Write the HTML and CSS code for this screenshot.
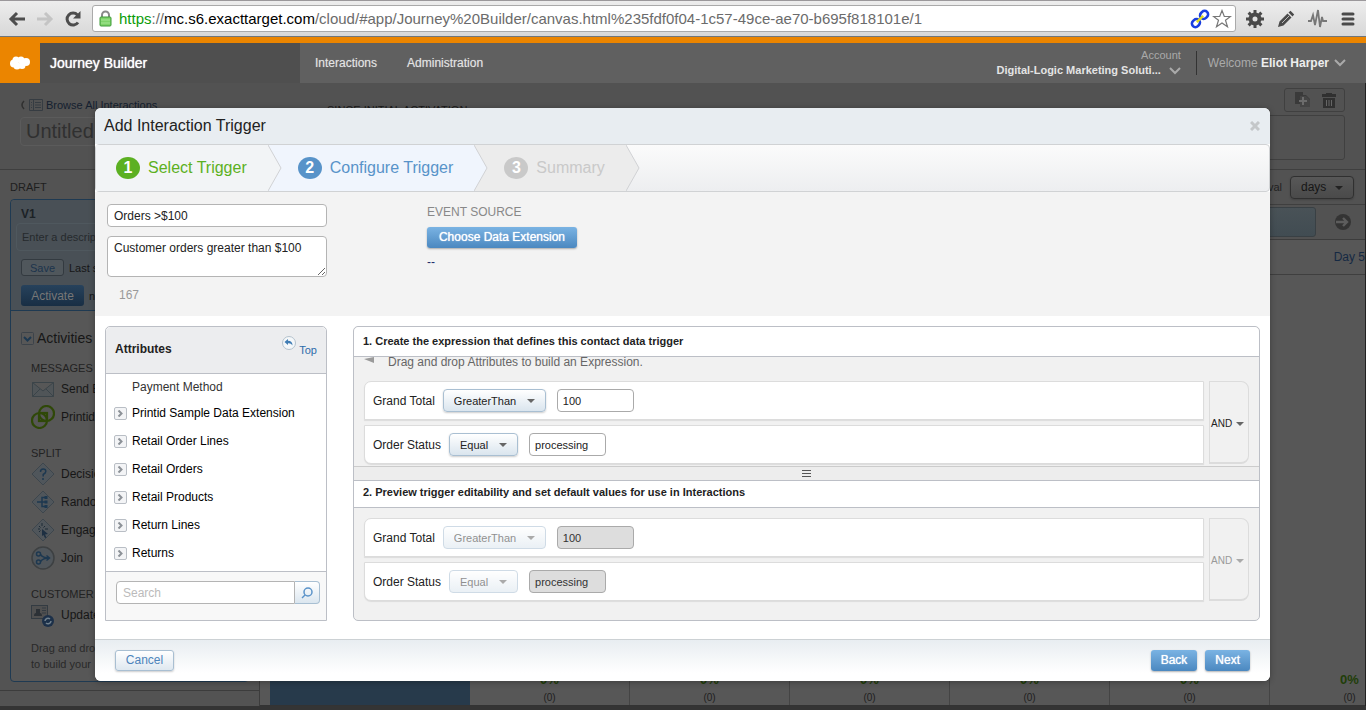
FILE: index.html
```html
<!DOCTYPE html>
<html lang="en">
<head>
<meta charset="utf-8">
<title>Journey Builder</title>
<link rel="stylesheet" href="styles.css">
</head>
<body>
<div class="browser">
  <button class="nav-btn" aria-label="Back"><svg width="18" height="18" viewBox="0 0 18 18" fill="none" stroke="#4d4d4d" stroke-width="3"><path d="M17 9H4M9 3L3 9l6 6"/></svg></button>
  <button class="nav-btn" aria-label="Forward"><svg width="18" height="18" viewBox="0 0 18 18" fill="none" stroke="#c4c4c4" stroke-width="3"><path d="M1 9h13M9 3l6 6-6 6"/></svg></button>
  <button class="nav-btn" aria-label="Reload"><svg width="18" height="18" viewBox="0 0 18 18"><path d="M14 12.500A6 6 0 1 1 13.500 5" fill="none" stroke="#4d4d4d" stroke-width="3"/><path d="M16.500 1v7.500H9z" fill="#4d4d4d"/></svg></button>
  <div class="address">
    <svg width="13" height="17" viewBox="0 0 13 17"><path d="M3 8V5a3.500 3.500 0 0 1 7 0v3" fill="none" stroke="#8a8a8a" stroke-width="2"/><rect x="1" y="7" width="11" height="9" rx="1" fill="#7fd36a" stroke="#3f9a38"/><path d="M2 10h9M2 13h9" stroke="#a5e694"/></svg>
    <div class="url"><span class="secure">https</span>://<span class="host">mc.s6.exacttarget.com</span>/cloud/#app/Journey%20Builder/canvas.html%235fdf0f04-1c57-49ce-ae70-b695f818101e/1</div>
    <svg width="20" height="20" viewBox="0 0 20 20" fill="none"><g transform="rotate(-45 10 10)" stroke="#1a3fe0" stroke-width="2.600"><rect x="0" y="6.500" width="8.500" height="7" rx="3.500"/><rect x="11.500" y="6.500" width="8.500" height="7" rx="3.500"/><path d="M5.500 10h9" stroke="#e0dc20" stroke-width="2.400"/></g></svg>
    <svg width="20" height="20" viewBox="0 0 20 20"><path d="M10 1.500l2.300 6h6.200l-5 3.800 2 6.500L10 14l-5.500 3.800 2-6.500-5-3.800h6.200z" fill="#fff" stroke="#777" stroke-width="1.200"/></svg>
  </div>
  <button class="ext" aria-label="Settings"><svg width="18" height="18" viewBox="0 0 18 18" fill="none" stroke="#4a4a4a"><circle cx="9" cy="9" r="4.500" stroke-width="4"/><path d="M9 0v4M9 14v4M0 9h4M14 9h4M2.600 2.600l3 3M12.400 12.400l3 3M2.600 15.400l3-3M12.400 5.600l3-3" stroke-width="3"/></svg></button>
  <button class="ext" aria-label="Edit"><svg width="18" height="18" viewBox="0 0 18 18" fill="#4a4a4a"><path d="M1 17l1.500-5.500 8-8 4 4-8 8zM11.500 2.500L13.500.800l3.700 3.700-1.700 2z"/><path d="M5 13l7-7" stroke="#bbb"/></svg></button>
  <button class="ext" aria-label="Activity"><svg width="20" height="20" viewBox="0 0 20 20" fill="none" stroke="#777" stroke-width="1.800"><path d="M1 12h3l2-6 2 10 3-15 2 17 2-10 1 4h4"/></svg></button>
  <button class="ext" aria-label="Menu"><svg width="14" height="14" viewBox="0 0 14 14" stroke="#4a4a4a" stroke-width="3" stroke-linecap="round"><path d="M2 2h10M2 7h10M2 12h10"/></svg></button>
</div>

<header class="topbar">
  <div class="logo"><svg width="20" height="14" viewBox="0 0 20 14" fill="#fff"><circle cx="4" cy="7.500" r="4"/><circle cx="6" cy="4" r="3.500"/><circle cx="11" cy="4" r="3.500"/><circle cx="16" cy="6" r="4"/><circle cx="7" cy="10" r="3.500"/><circle cx="12" cy="9.500" r="3.500"/></svg></div>
  <h1 class="product">Journey Builder</h1>
  <nav class="menu"><a href="#">Interactions</a><a href="#">Administration</a></nav>
  <button class="account"><span class="account-label">Account</span><span class="account-name"><b>Digital-Logic Marketing Soluti...</b><svg width="12" height="8" viewBox="0 0 12 8"><path d="M1 1l5 5 5-5" fill="none" stroke="#aaa" stroke-width="2"/></svg></span></button>
  <button class="user"><span>Welcome <b>Eliot Harper</b></span><svg width="12" height="8" viewBox="0 0 12 8"><path d="M1 1l5 5 5-5" fill="none" stroke="#aaa" stroke-width="2"/></svg></button>
</header>

<main class="workspace">
  <section class="titlebar">
    <div class="title-left">
      <a class="browse" href="#"><svg width="6" height="10" viewBox="0 0 6 10"><path d="M4 1Q0 5 4 9" fill="none" stroke="#303030" stroke-width="1.500"/></svg><svg width="14" height="12" viewBox="0 0 14 12" fill="none" stroke="#363c42"><path d="M.5.500h13v11H.500zM4.500 1v10M2 3.500h1M6 3.500h6M2 6h1M6 6h6M2 8.500h1M6 8.500h6"/></svg>Browse All Interactions</a>
      <input class="name" aria-label="Interaction name" value="Untitled">
    </div>
    <div class="stats-title">SINCE INITIAL ACTIVATION</div>
    <div class="title-right">
      <div class="tools">
        <button aria-label="Copy"><svg width="18" height="16" viewBox="0 0 18 16"><path d="M1 0h8v3h3l4 4v8H6v-3H1z" fill="#3a3a3a"/><path d="M6 4h6l4 4v7H6z" fill="#454545"/><path d="M9 5v8M5 9h8" stroke="#6c6c6c" stroke-width="2"/></svg></button>
        <button aria-label="Delete"><svg width="14" height="15" viewBox="0 0 14 15" fill="#303030"><path d="M4 0h6v1h4v3H0V1h4zM1 5h12v10H1z"/><path d="M4.500 7v6M7 7v6M9.500 7v6" stroke="#666"/></svg></button>
      </div>
      <div class="stats"></div>
    </div>
  </section>
  <div class="columns">
    <aside class="side">
      <div class="draft">DRAFT</div>
      <div class="version">
        <div class="version-head">
          <b class="v-name">V1</b>
          <input class="v-desc" aria-label="Description" placeholder="Enter a description">
          <div class="v-row"><button class="save">Save</button>Last saved</div>
          <div class="v-row"><button class="activate">Activate</button>new</div>
        </div>
        <div class="acts">
          <h2><svg width="13" height="13" viewBox="0 0 13 13" fill="none"><rect x=".5" y=".5" width="12" height="12" rx="1" stroke="#3c434a"/><path d="M3 5l3.500 3.500L10 5" stroke="#1d3850" stroke-width="2"/></svg>Activities</h2>
          <h3>MESSAGES</h3>
          <ul>
            <li><svg width="24" height="24" viewBox="0 0 24 24" fill="#505558" stroke="#3b4449"><path d="M1.500 5.500h21v14h-21zM1.500 5.500L12 14l10.500-8.500M1.500 19.500L9 12M22.500 19.500L15 12"/></svg>Send Email</li>
            <li><svg width="24" height="24" viewBox="0 0 24 24" fill="none" stroke="#2f4808" stroke-width="2.200"><circle cx="8.500" cy="15.500" r="7.500"/><circle cx="15.500" cy="8.500" r="7.500"/><rect x="8" y="8" width="8" height="8"/></svg>Printid</li>
          </ul>
          <h3>SPLIT</h3>
          <ul>
            <li><svg width="24" height="24" viewBox="0 0 24 24" fill="#50565b" stroke="#3d464d"><path d="M12 1l11 11-11 11L1 12z"/><path d="M9.500 10q0-3 2.700-3t2.600 2.500q0 1.500-2.600 3v2M12 16v2" fill="none" stroke="#1d3850" stroke-width="1.500"/></svg>Decision</li>
            <li><svg width="24" height="24" viewBox="0 0 24 24" fill="#50565b" stroke="#3d464d"><path d="M12 1l11 11-11 11L1 12z"/><path d="M6 12h9M15 7.500h-4v9h4" fill="none" stroke="#1d3850" stroke-width="1.500"/><path d="M13.500 6h3v3h-3zM13.500 10.500h3v3h-3zM13.500 15h3v3h-3z" fill="#1d3850" stroke="none"/></svg>Random</li>
            <li><svg width="24" height="24" viewBox="0 0 24 24" fill="#50565b" stroke="#3d464d"><path d="M12 1l11 11-11 11L1 12z"/><path d="M11 5v3M7 11h2M14 11h3M8 8l1.500 1.500M14 8l-1.500 1.500M8 14l1.500-1.500" fill="none" stroke="#1d2a36"/><path d="M11 11l6 5-3 .500 1.500 3-1.500.500-1.500-3-1.500 1z" fill="#1d2f42" stroke="none"/></svg>Engage</li>
            <li><svg width="24" height="24" viewBox="0 0 24 24" fill="none" stroke="#1d3850" stroke-width="1.500"><circle cx="12" cy="12" r="11" fill="#50565b" stroke="#3d4042"/><circle cx="7.500" cy="8" r="2"/><circle cx="7.500" cy="16" r="2"/><path d="M9.500 8.500Q12 12 18 12M9.500 15.500Q12 12 18 12M15.500 9.500L18.500 12l-3 2.500"/></svg>Join</li>
          </ul>
          <h3>CUSTOMER UPDATES</h3>
          <ul>
            <li><svg width="24" height="24" viewBox="0 0 24 24"><rect x=".5" y="2.500" width="16" height="13" fill="#505050" stroke="#333b42"/><path d="M3 13q0-3 2-3V6h4v4q2 0 2 3z" fill="#2c3136"/><path d="M11 5h4M11 7.500h4M11 10h4" stroke="#333b42"/><circle cx="17" cy="18" r="6" fill="#1c3049"/><path d="M14 18a3 3 0 0 1 5-2M20 18a3 3 0 0 1-5 2" stroke="#70808d" fill="none" stroke-width="1.500"/></svg>Update</li>
          </ul>
          <p>Drag and drop<br>to build your</p>
        </div>
      </div>
      <div class="side-foot"></div>
    </aside>
    <section class="canvas">
      <div class="interval"><label for="unit">Interval</label><span class="pick dim"><select id="unit"><option>days</option></select></span></div>
      <div class="pager"><div class="range"></div><svg width="16" height="16" viewBox="0 0 16 16"><circle cx="8" cy="8" r="8" fill="#343434"/><path d="M1 8h11M8 4l4 4-4 4" fill="none" stroke="#5d5d5d" stroke-width="2.400"/></svg></div>
      <div class="days"><a href="#">Day 5</a></div>
      <div class="goals">
        <div class="goal-block"></div>
        <div class="goal"><b>0%</b><span>(0)</span></div>
        <div class="goal"><b>0%</b><span>(0)</span></div>
        <div class="goal"><b>0%</b><span>(0)</span></div>
        <div class="goal"><b>0%</b><span>(0)</span></div>
        <div class="goal"><b>0%</b><span>(0)</span></div>
        <div class="goal"><b>0%</b><span>(0)</span></div>
      </div>
    </section>
  </div>
</main>
<div class="desk"></div>

<div class="modal" role="dialog" aria-labelledby="dlg-title">
  <div class="modal-head"><h2 id="dlg-title">Add Interaction Trigger</h2><button class="close" aria-label="Close"><svg width="10" height="10" viewBox="0 0 10 10"><path d="M1 1l8 8M9 1L1 9" stroke="#c4c7c9" stroke-width="3"/></svg></button></div>
  <ol class="steps">
    <li class="step done"><b>1</b>Select Trigger<svg class="chev" viewBox="0 0 14 46"><path d="M0 0l13 23L0 46z" fill="#f2f4f6"/><path d="M0 0l13 23L0 46" fill="none" stroke="#d0d2d4"/></svg></li>
    <li class="step now"><b>2</b>Configure Trigger<svg class="chev" viewBox="0 0 14 46"><path d="M0 0l13 23L0 46z" fill="#f0f5fd"/><path d="M0 0l13 23L0 46" fill="none" stroke="#d0d2d4"/></svg></li>
    <li class="step later"><b>3</b>Summary<svg class="chev" viewBox="0 0 14 46"><path d="M0 0l13 23L0 46z" fill="#ececec"/><path d="M0 0l13 23L0 46" fill="none" stroke="#d0d2d4"/></svg></li>
  </ol>
  <div class="setup">
    <div class="fields">
      <input aria-label="Trigger name" value="Orders &gt;$100">
      <textarea aria-label="Trigger description">Customer orders greater than $100</textarea>
      <div class="count">167</div>
    </div>
    <div class="source">
      <div class="source-label">EVENT SOURCE</div>
      <button class="primary">Choose Data Extension</button>
      <div>--</div>
    </div>
  </div>
  <div class="builder">
    <div class="attrs">
      <div class="attrs-head"><b>Attributes</b><a href="#"><svg width="14" height="14" viewBox="0 0 14 14"><circle cx="7" cy="7" r="6.500" fill="#f4f7f9" stroke="#b4c2cd"/><path d="M6 3L2.500 6 6 9V7.200q3-.4 4.500 2.300Q10.500 5 6 4.800z" fill="#3f7cb4"/></svg><span>Top</span></a></div>
      <ul class="tree">
        <li class="leaf">Payment Method</li>
        <li><button aria-label="Expand"><svg width="7" height="7" viewBox="0 0 7 7"><path d="M1.500.500l3 3-3 3" fill="none" stroke="#8c9197" stroke-width="2"/></svg></button>Printid Sample Data Extension</li>
        <li><button aria-label="Expand"><svg width="7" height="7" viewBox="0 0 7 7"><path d="M1.500.500l3 3-3 3" fill="none" stroke="#8c9197" stroke-width="2"/></svg></button>Retail Order Lines</li>
        <li><button aria-label="Expand"><svg width="7" height="7" viewBox="0 0 7 7"><path d="M1.500.500l3 3-3 3" fill="none" stroke="#8c9197" stroke-width="2"/></svg></button>Retail Orders</li>
        <li><button aria-label="Expand"><svg width="7" height="7" viewBox="0 0 7 7"><path d="M1.500.500l3 3-3 3" fill="none" stroke="#8c9197" stroke-width="2"/></svg></button>Retail Products</li>
        <li><button aria-label="Expand"><svg width="7" height="7" viewBox="0 0 7 7"><path d="M1.500.500l3 3-3 3" fill="none" stroke="#8c9197" stroke-width="2"/></svg></button>Return Lines</li>
        <li><button aria-label="Expand"><svg width="7" height="7" viewBox="0 0 7 7"><path d="M1.500.500l3 3-3 3" fill="none" stroke="#8c9197" stroke-width="2"/></svg></button>Returns</li>
      </ul>
      <div class="search"><input aria-label="Search attributes" placeholder="Search"><button aria-label="Search"><svg width="12" height="12" viewBox="0 0 12 12" fill="none" stroke="#5b93c9" stroke-width="1.500"><circle cx="7" cy="5" r="4"/><path d="M4 8L1 11"/></svg></button></div>
    </div>
    <div class="expr">
      <h3 class="h-first">1. Create the expression that defines this contact data trigger</h3>
      <div class="zone">
        <div class="hint"><svg width="12" height="6" viewBox="0 0 12 6"><path d="M0 2L10 0v6z" fill="#9a9a9a"/></svg>Drag and drop Attributes to build an Expression.</div>
        <div class="group">
          <div class="rules">
            <div class="rule"><label for="v1">Grand Total</label><span class="pick gt"><select aria-label="Operator"><option>GreaterThan</option></select></span><input id="v1" value="100"></div>
            <div class="rule"><label for="v2">Order Status</label><span class="pick eq"><select aria-label="Operator"><option>Equal</option></select></span><input id="v2" value="processing"></div>
          </div>
          <button class="and">AND</button>
        </div>
      </div>
      <div class="splitter"><svg width="9" height="7" viewBox="0 0 9 7"><path d="M0 .5h9M0 3.500h9M0 6.500h9" stroke="#555"/></svg></div>
      <h3 class="h-second">2. Preview trigger editability and set default values for use in Interactions</h3>
      <div class="zone preview">
        <div class="group">
          <div class="rules">
            <div class="rule"><label for="v3">Grand Total</label><span class="pick gt off"><select aria-label="Operator" disabled><option>GreaterThan</option></select></span><input id="v3" value="100" disabled></div>
            <div class="rule"><label for="v4">Order Status</label><span class="pick eq off"><select aria-label="Operator" disabled><option>Equal</option></select></span><input id="v4" value="processing" disabled></div>
          </div>
          <button class="and" disabled>AND</button>
        </div>
      </div>
    </div>
  </div>
  <div class="modal-foot"><button class="secondary">Cancel</button><div class="foot-right"><button class="primary">Back</button><button class="primary">Next</button></div></div>
</div>
</body>
</html>
```
FILE: styles.css
```css
* { box-sizing: border-box; }
body { margin: 0; min-height: 100vh; display: flex; flex-direction: column; position: relative; overflow: hidden; background: #565656; font: 12px/16px "Liberation Sans", Arial, sans-serif; color: #222; }
h1, h2, h3, p, ul, ol { margin: 0; padding: 0; list-style: none; }
button, input, select, textarea { font: inherit; color: inherit; margin: 0; }
button { border: 0; background: none; padding: 0; cursor: pointer; }
svg { display: block; flex: none; }
a { text-decoration: none; color: inherit; }

/* Browser toolbar */
.browser { display: flex; align-items: center; height: 37px; padding: 0 11px 0 8px; background: linear-gradient(#ededed, #d8d8d8); border-top: 1px solid #9b989b; border-bottom: 1px solid #6f767c; }
.nav-btn { width: 28px; }
.address { flex: 1; display: flex; align-items: center; height: 27px; padding: 0 3px 0 6px; gap: 2px; background: #fff; border: 1px solid #aaa; border-radius: 3px; }
.url { flex: 1; padding-left: 5px; font-size: 15px; line-height: 20px; color: #6b6b6b; white-space: nowrap; overflow: hidden; }
.secure { color: #0a9c0a; }
.host { color: #000; }
.ext { width: 31px; display: flex; justify-content: center; }
.address + .ext { margin-left: 3px; }
.ext:last-child { width: 23px; justify-content: flex-end; }

/* App header */
.topbar { display: flex; align-items: stretch; height: 46px; border-top: 6px solid #eb8500; background: #606060; color: #e4e4e4; }
.logo { width: 40px; display: flex; align-items: center; justify-content: center; background: #eb8500; }
.product { width: 260px; padding-left: 10px; background: #4f4f4f; color: #fff; font-size: 14px; line-height: 40px; text-shadow: 0 0 1px #fff; font-weight: normal; }
.menu { flex: 1; display: flex; gap: 30px; padding-left: 15px; line-height: 40px; text-shadow: 0 0 1px #999; }
.account { display: flex; flex-direction: column; align-items: flex-end; justify-content: center; padding-right: 15px; font-size: 11px; line-height: 15px; }
.account-label { color: #aaa; }
.account-name { display: flex; align-items: center; gap: 8px; }
.user { display: flex; align-items: center; gap: 5px; margin: 8px 20px 8px 0; padding-left: 11px; border-left: 1px solid #333; color: #aaa; }
.user b { color: #eee; }

/* Dimmed workspace */
.workspace { flex: 1; display: flex; flex-direction: column; border-right: 1px solid #222; }
.titlebar { display: flex; height: 87px; padding: 5px 20px 0; background: #525252; border-bottom: 1px solid #3f3f3f; }
.title-left { width: 307px; padding-top: 9px; }
.browse { display: flex; align-items: center; gap: 3px; font-size: 11px; line-height: 16px; color: #14202f; }
.name { display: block; width: 290px; height: 29px; margin-top: 4px; padding: 0 5px; border: 1px solid #5b5b5b; border-radius: 4px; background: none; font-size: 20px; color: #303030; }
.stats-title { flex: 1; padding-top: 14px; font-size: 11px; color: #1a1a1a; }
.title-right { width: 420px; display: flex; flex-direction: column; align-items: flex-end; gap: 3px; }
.tools { display: flex; align-items: center; justify-content: center; gap: 10px; width: 61px; height: 24px; border: 1px solid #404040; border-radius: 3px; }
.stats { align-self: stretch; height: 45px; border: 1px solid #404040; border-radius: 3px; }
.columns { flex: 1; display: flex; }
.side { width: 260px; border-right: 1px solid #3c3c3c; background: #535353; display: flex; flex-direction: column; }
.draft { padding: 9px 10px 4px; font-size: 11px; color: #1e1e1e; }
.version { margin: 0 10px; flex: 1; border: 1px solid #1f3a52; border-radius: 4px; background: #575757; color: #161616; }
.version-head { padding: 6px 10px 4px; background: #495056; border-bottom: 1px solid #1f3a52; border-radius: 4px 4px 0 0; }
.v-name { display: block; color: #1c2226; }
.v-desc { display: block; width: 100%; height: 28px; margin: 1px 0 8px -5px; padding: 0 5px; border: 1px solid #4f585e; border-radius: 4px; background: none; font-size: 11px; }
.v-desc::placeholder { color: #262a2d; opacity: 1; }
.v-row { display: flex; align-items: center; gap: 5px; margin-bottom: 9px; font-size: 11px; }
.v-row:last-child { margin-bottom: 0; }
.save { width: 43px; height: 17px; border: 1px solid #333a40; border-radius: 3px; background: #50575c; color: #1c344c; }
.activate { width: 63px; height: 21px; border-radius: 3px; background: linear-gradient(#27425c, #182e44); color: #777; font-size: 12px; }
.acts { padding: 18px 10px 0; }
.acts h2 { display: flex; align-items: center; gap: 3px; font-size: 14px; line-height: 18px; font-weight: normal; }
.acts h3 { margin-left: 10px; padding: 15px 0 0; font-size: 11px; line-height: 13px; font-weight: normal; color: #222; }
.acts ul { margin-left: 10px; padding-bottom: 1px; }
.acts li { display: flex; align-items: center; gap: 6px; height: 28px; white-space: nowrap; }
.acts p { margin: 10px 0 0 10px; font-size: 11px; color: #292929; }
.side-foot { height: 16px; margin-top: 8px; border-top: 1px solid #3c3c3c; }
.canvas { flex: 1; min-width: 0; display: flex; flex-direction: column; background: #575757; overflow: hidden; }
.interval { display: flex; justify-content: flex-end; align-items: center; gap: 8px; height: 35px; padding-right: 11px; border-bottom: 1px solid #3f3f3f; background: #525252; font-size: 11px; }
.pager { display: flex; align-items: center; height: 35px; padding-right: 14px; gap: 19px; border-bottom: 1px solid #3c3c3c; background: #525252; }
.range { flex: 1; height: 30px; border: 1px solid #394044; border-radius: 3px; background: linear-gradient(#495257, #414c52); }
.days { height: 35px; line-height: 34px; text-align: right; border-bottom: 1px solid #3f3f3f; color: #152943; }
.goals { margin-top: auto; display: flex; height: 42px; padding-left: 10px; border-bottom: 1px solid #333; }
.goal-block { width: 200px; background: #273a4b; flex: none; }
.goal { flex: 0 0 160px; display: flex; flex-direction: column; align-items: center; padding-top: 6px; border-right: 1px solid #444; color: #202020; font-size: 10px; }
.goal b { font-size: 13px; line-height: 20px; color: #1f3e09; }
.desk { height: 4px; background: #343434; }

/* Dialog */
.modal { position: absolute; top: 108px; left: 95px; right: 96px; background: #fff; border-radius: 6px; overflow: hidden; box-shadow: 0 1px 6px rgba(0, 0, 0, .3); }
.modal-head { display: flex; align-items: center; justify-content: space-between; height: 36px; padding: 0 10px 0 9px; background: #e8edf1; }
.modal-head h2 { font-size: 16px; line-height: 20px; font-weight: normal; }
.steps { display: flex; height: 48px; border: 1px solid #d0d2d4; border-radius: 4px; background: linear-gradient(#fbfbfb, #edeef0); }
.step { display: flex; align-items: center; gap: 8px; padding-left: 16px; font-size: 16px; }
.step:first-child { padding-left: 20px; }
.step b { width: 24px; height: 22px; border-radius: 50%; line-height: 22px; text-align: center; color: #fff; }
.chev { width: 14px; height: 46px; margin-left: 13px; }
.done { background: #f2f4f6; color: #5cb022; }
.done b { background: #5cb022; }
.now { background: #f0f5fd; color: #5893c9; }
.now b { background: #5893c9; }
.later { background: #ececec; color: #c9c9c9; }
.later b { background: #c9c9c9; }
.done .chev { background: #f0f5fd; }
.now .chev { background: #ececec; }
.later .chev { background: linear-gradient(#fbfbfb, #edeef0); }
.setup { display: flex; gap: 100px; height: 124px; padding: 12px; background: #f3f3f3; }
.fields { width: 220px; }
.fields input, .fields textarea { display: block; width: 100%; height: 23px; padding: 0 6px; border: 1px solid #b4b4b4; border-radius: 4px; background: #fff; }
.fields textarea { height: 41px; margin-top: 9px; padding-top: 3px; resize: vertical; }
.count { padding: 10px 12px; color: #999; }
.source { color: #1c2b6b; }
.source-label { color: #888; }
.source .primary { width: 150px; margin: 7px 0 6px; }
.primary { height: 21px; padding: 0 10px 2px; border-radius: 3px; background: linear-gradient(#7ab3e3, #4b88c0); color: #fff; text-shadow: 0 0 1px #fff; box-shadow: 0 1px 2px rgba(0, 0, 0, .3); }
.builder { display: flex; gap: 26px; padding: 10px 10px 18px; }
.attrs { width: 222px; display: flex; flex-direction: column; border: 1px solid #bcbfc6; border-radius: 5px 5px 0 0; }
.attrs-head { display: flex; justify-content: space-between; align-items: center; height: 47px; padding: 0 9px 2px; background: #ecedef; border-bottom: 1px solid #bcbfc6; border-radius: 5px 5px 0 0; }
.attrs-head a { display: flex; gap: 3px; padding-bottom: 4px; font-size: 11px; color: #2c6cab; }
.attrs-head a span { padding-top: 6px; }
.tree { padding: 0 8px 4px; color: #000; }
.tree li { display: flex; align-items: center; gap: 5px; height: 28px; }
.tree .leaf { height: 25px; padding-left: 18px; color: #333; }
.tree button { width: 13px; height: 13px; display: flex; align-items: center; justify-content: center; border: 1px solid #b9bec5; border-radius: 2px; background: #f3f4f6; }
.search { flex: 1; display: flex; align-items: flex-start; padding: 9px 6px 16px 10px; background: #f8f8f8; border-top: 1px solid #bcbfc6; }
.search input { flex: 1; min-width: 0; height: 23px; padding: 0 6px; border: 1px solid #b4b4b4; border-radius: 4px 0 0 4px; background: #fff; }
.search input::placeholder { color: #bbb; opacity: 1; }
.search button { width: 25px; height: 23px; display: flex; align-items: center; justify-content: center; border: 1px solid #a8bfd2; border-left: 0; border-radius: 0 4px 4px 0; background: linear-gradient(#fff, #dbe6ef); }
.expr { flex: 1; min-width: 0; border: 1px solid #bcbfc6; border-radius: 5px; background: #f1f1f1; }
.expr h3 { padding-left: 9px; font-size: 11px; font-weight: bold; background: #fff; border-bottom: 1px solid #bcbfc6; }
.h-first { line-height: 29px; border-radius: 5px 5px 0 0; }
.h-second { line-height: 23px; height: 28px; border-top: 1px solid #bcbfc6; }
.zone { padding: 0 10px 2px; }
.hint { display: flex; align-items: flex-start; gap: 12px; height: 24px; line-height: 10px; color: #666; }
.group { display: flex; gap: 5px; }
.rules { flex: 1; display: flex; flex-direction: column; gap: 5px; }
.rule { display: flex; align-items: center; height: 39px; padding-left: 8px; border: 1px solid #dcdcdc; background: #fff; box-shadow: 0 1px 1px #dcdcdc; }
.rule:first-child { border-top-left-radius: 7px; }
.rule:last-child { border-bottom-left-radius: 7px; }
.rule label { margin-right: 8px; }
.pick { position: relative; display: block; height: 23px; }
.pick select { appearance: none; width: 100%; height: 23px; padding: 0 10px; border: 1px solid #a9bfd2; border-radius: 4px; background: linear-gradient(#fff, #dae5ee); font-size: 11px; box-shadow: 0 1px 2px rgba(0, 0, 0, .2); }
.pick::after { content: ""; position: absolute; right: 11px; top: 10px; border: 4px solid transparent; border-top-color: #666; border-bottom: 0; pointer-events: none; }
.gt { width: 103px; }
.eq { width: 69px; }
.off { opacity: .55; }
.off select { box-shadow: none; opacity: 1; color: #333; }
.rule input { width: 77px; height: 23px; margin-left: 11px; padding: 0 5px; border: 1px solid #aaa; border-radius: 4px; background: #fff; font-size: 11px; }
.rule input:disabled { background: #ddd; color: #333; }
.and { display: flex; align-items: center; gap: 4px; width: 40px; padding: 3px 0 0 1px; border: 1px solid #dcdcdc; border-width: 1px 1px 2px; border-radius: 0 8px 8px 0; font-size: 10px; }
.and::after { content: ""; border: 4px solid transparent; border-top-color: #666; border-bottom: 0; }
.and:disabled { color: #999; }
.and:disabled::after { border-top-color: #aaa; }
.splitter { display: flex; align-items: center; justify-content: center; height: 14px; background: #ededed; border-top: 1px solid #ccc; }
.preview { padding-top: 10px; padding-bottom: 18px; }
.dim { width: 64px; }
.dim select { border-color: #303030; background: linear-gradient(#585858, #4a4a4a); font-size: 12px; color: #161616; }
.dim::after { border-top-color: #222; }
.modal-foot { display: flex; justify-content: space-between; align-items: flex-start; height: 42px; padding: 10px 20px; border-top: 1px solid #ccd1d4; background: linear-gradient(#e8edf1, #fff 80%); }
.foot-right { display: flex; gap: 8px; }
.secondary { width: 59px; height: 21px; padding-bottom: 2px; border: 1px solid #a9bfd2; border-radius: 3px; background: linear-gradient(#fff, #dfe8f0); color: #4d84bb; box-shadow: 0 1px 2px rgba(0, 0, 0, .2); }
```
